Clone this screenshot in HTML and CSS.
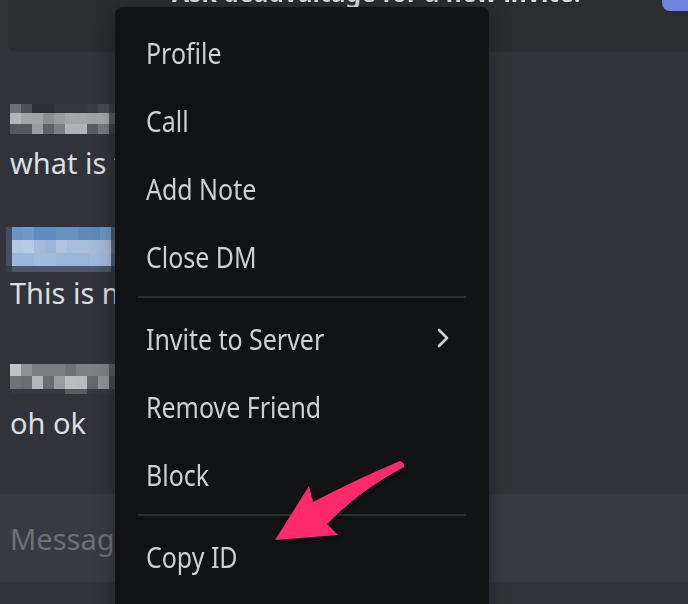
FILE: index.html
```html
<!DOCTYPE html>
<html lang="en">

<head>
    <meta charset="UTF-8">
    <meta name="viewport" content="width=device-width, initial-scale=1.0">
    <title>Direct Message</title>
    <link rel="stylesheet" href="styles.css">
</head>

<body>

    <div class="page">
        <!-- invite banner, scrolled mostly out of view -->
        <div class="banner">
            <span class="banner-text">Ask deadvaltage for a new invite.</span>
            <span class="banner-btn"></span>
        </div>

        <div class="messages">
            <div class="msg">
                <div class="name name-1">
                    <div class="px px-1a"></div>
                    <div class="px px-1b"></div>
                    <div class="px px-1c"></div>
                </div>
                <div class="msg-text">what is this</div>
            </div>

            <div class="msg">
                <div class="name name-2">
                    <div class="px px-2a"></div>
                    <div class="px px-2b"></div>
                    <div class="px px-2c"></div>
                    <div class="px px-2d"></div>
                </div>
                <div class="msg-text">This is my user ID</div>
            </div>

            <div class="msg">
                <div class="name name-3">
                    <div class="px px-3a"></div>
                    <div class="px px-3b"></div>
                    <div class="px px-3c"></div>
                </div>
                <div class="msg-text">oh ok</div>
            </div>
        </div>

        <div class="composer">
            <span class="placeholder">Message @friend</span>
        </div>
    </div>

    <!-- context menu -->
    <div class="menu">
        <div class="menu-item"><span class="label">Profile</span></div>
        <div class="menu-item"><span class="label">Call</span></div>
        <div class="menu-item"><span class="label">Add Note</span></div>
        <div class="menu-item"><span class="label">Close DM</span></div>
        <div class="menu-sep"></div>
        <div class="menu-item">
            <span class="label">Invite to Server</span>
            <svg class="chevron" width="24" height="24" viewBox="0 0 24 24">
                <path d="M6 4l8 8-8 8" fill="none" stroke="currentColor" stroke-width="2.6" stroke-linecap="round" stroke-linejoin="round" />
            </svg>
        </div>
        <div class="menu-item"><span class="label">Remove Friend</span></div>
        <div class="menu-item"><span class="label">Block</span></div>
        <div class="menu-sep"></div>
        <div class="menu-item"><span class="label">Copy ID</span></div>
    </div>

    <!-- annotation arrow -->
    <svg class="arrow" width="688" height="604" viewBox="0 0 688 604">
        <path d="M400 461 Q405 463 404 467 Q360 490 327 524 L338 535 L275 540 L309 486 L313 502 Q355 480 400 461 Z" fill="#ff2a6e" />
    </svg>

</body>

</html>
```

FILE: styles.css
```css
body {
    margin: 0;
    padding: 0;
    width: 688px;
    height: 604px;
    overflow: hidden;
    background: #313338;
    font-family: "Noto Sans", "Open Sans", sans-serif;
    position: relative;
}

.page {
    display: flex;
    flex-direction: column;
    height: 604px;
}

.banner {
    display: flex;
    align-items: flex-start;
    height: 52px;
    margin-left: 8px;
    background: #2b2d31;
    border-bottom-left-radius: 8px;
    overflow: hidden;
}

.banner-text {
    display: inline-block;
    margin-top: -26px;
    margin-left: 164px;
    font-size: 29px;
    font-weight: bold;
    line-height: 34px;
    color: #dbdee1;
    white-space: nowrap;
    transform: scaleX(0.85);
    transform-origin: left center;
}

.banner-btn {
    margin-left: auto;
    width: 26px;
    height: 11px;
    background: #7083e0;
    border-bottom-left-radius: 8px;
}

.messages {
    flex: 1;
    padding: 52px 0 0 10px;
}

.msg {
    margin-bottom: 53px;
}

.name {
    width: 106px;
    height: 30px;
    margin-bottom: 11px;
    display: flex;
    flex-direction: column;
}

.px {
    flex: 1;
}

.name-2 {
    margin-left: -4px;
    width: 114px;
    height: 45px;
    margin-top: -7px;
    margin-bottom: 3px;
}

.px-1a {
    flex: 0 0 9px;
    background: linear-gradient(to right, #6d6f74 0 11px, #4d4f55 11px 22px, #2e3036 22px 44px, #35373d 44px 77px, #3a3c42 77px 88px, #4a4c51 88px 99px, #3a3c41 99px);
}

.px-1b {
    flex: 0 0 11px;
    background: linear-gradient(to right, #b3b5b8 0 11px, #a2a4a7 11px 22px, #a0a2a5 22px 33px, #8a8c90 33px 44px, #9a9c9f 44px 55px, #a4a6a9 55px 66px, #a3a5a8 66px 77px, #9fa1a4 77px 88px, #a3a5a8 88px 99px, #55575c 99px);
}

.px-1c {
    flex: 0 0 10px;
    background: linear-gradient(to right, #55575c 0 22px, #9a9c9f 22px 33px, #5f6166 33px 44px, #7c7e82 44px 55px, #b0b2b5 55px 77px, #5a5c61 77px 88px, #77797d 88px 99px, #3a3c41 99px);
}

.px-2a {
    flex: 0 0 13px;
    background: linear-gradient(to right, #3d4d63 0 6px, #6b93c4 6px 17px, #7199c8 17px 28px, #5f8bc0 28px 50px, #6891c3 50px 72px, #5e89bd 72px 94px, #6d94c4 94px 105px, #4b5563 105px);
}

.px-2b {
    flex: 0 0 13px;
    background: linear-gradient(to right, #3f5068 0 6px, #b4c8e0 6px 17px, #b8cbe2 17px 28px, #a6bad6 28px 39px, #9fb5d3 39px 50px, #b2c4dc 50px 61px, #a9bdd8 61px 72px, #aabcd6 72px 83px, #a8bad4 83px 105px, #5e646d 105px);
}

.px-2c {
    flex: 0 0 13px;
    background: linear-gradient(to right, #3f5068 0 6px, #9cb7d9 6px 28px, #a2bcdc 28px 50px, #9ab5d7 50px 83px, #a0badb 83px 105px, #4c5a6c 105px);
}

.px-2d {
    flex: 0 0 6px;
    background: linear-gradient(to right, #33404f 0 6px, #46576e 6px 105px, #2f3640 105px);
}

.px-3a {
    flex: 0 0 12px;
    background: linear-gradient(to right, #c0c2c5 0 11px, #8e9094 11px 22px, #7a7c80 22px 55px, #6f7175 55px 66px, #7e8084 66px 99px, #55575c 99px);
}

.px-3b {
    flex: 0 0 13px;
    background: linear-gradient(to right, #6f7175 0 11px, #6a6c70 11px 22px, #b5b7ba 22px 33px, #6a6c70 33px 44px, #9a9c9f 44px 55px, #bbbdc0 55px 66px, #b8babd 66px 77px, #66686c 77px 88px, #8f9195 88px 99px, #45474c 99px);
}

.px-3c {
    flex: 0 0 5px;
    background: linear-gradient(to right, #35373c 0 55px, #5a5c60 55px 77px, #35373c 77px);
}

.msg-text {
    font-size: 29px;
    line-height: 36px;
    color: #dbdee1;
    white-space: nowrap;
}

.composer {
    height: 88px;
    margin-bottom: 22px;
    background: #383a40;
    display: flex;
    align-items: center;
    padding-left: 10px;
}

.placeholder {
    font-size: 29px;
    color: #6d6f78;
    white-space: nowrap;
}

.menu {
    position: absolute;
    left: 115px;
    top: 7px;
    width: 374px;
    height: 620px;
    box-sizing: border-box;
    padding-top: 11px;
    background: #111214;
    border-radius: 8px;
    box-shadow: 0 4px 20px rgba(0, 0, 0, 0.35);
}

.menu-item {
    height: 68px;
    padding: 0 32px 0 31px;
    display: flex;
    align-items: center;
    justify-content: space-between;
    font-size: 29px;
    color: #cdd0d3;
}

.label {
    display: inline-block;
    white-space: nowrap;
    transform: scaleX(0.86);
    transform-origin: left center;
}

.chevron {
    color: #cdd0d3;
}

.menu-sep {
    height: 2px;
    margin: 6px 23px;
    background: #2b2d31;
}

.arrow {
    position: absolute;
    left: 0;
    top: 0;
    filter: drop-shadow(1px 2px 2px rgba(0, 0, 0, 0.4));
}
```
